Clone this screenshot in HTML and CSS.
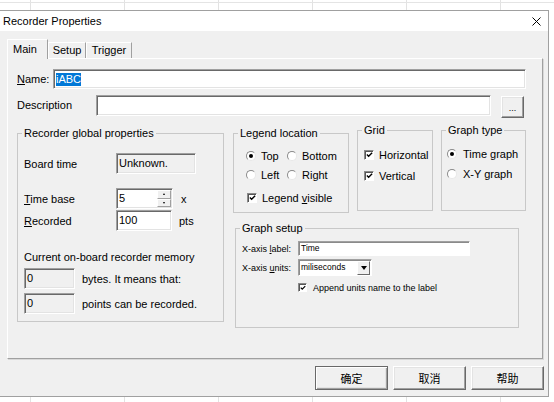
FILE: index.html
```html
<!DOCTYPE html>
<html lang="en">
<head>
    <meta charset="UTF-8">
    <meta name="viewport" content="width=device-width, initial-scale=1.0">
    <title>Recorder Properties</title>
    <link rel="stylesheet" href="styles.css">
</head>
<body>
    <div class="dialog">
        <div class="titlebar">
            <span class="title">Recorder Properties</span>
            <svg class="close" width="9" height="9" viewBox="0 0 9 9">
                <path d="M0.5 0.5 L8.5 8.5 M8.5 0.5 L0.5 8.5" stroke="#000" stroke-width="1" fill="none"/>
            </svg>
        </div>
        <div class="client">
            <div class="tabs">
                <div class="tab active tab-main">Main</div>
                <div class="tab tab-setup">Setup</div>
                <div class="tab tab-trigger">Trigger</div>
            </div>
            <div class="panel">
                <div class="name-row">
                    <span class="lbl name-lbl"><u>N</u>ame:</span>
                    <div class="field name-field"><span class="sel">iABC</span></div>
                </div>
                <div class="desc-row">
                    <span class="lbl desc-lbl">Description</span>
                    <div class="field desc-field"></div>
                    <div class="btn dots-btn">...</div>
                </div>
                <div class="groups">
                    <!-- left column -->
                    <fieldset class="group recorder">
                        <legend>Recorder global properties</legend>
                        <div class="rec-row board-row">
                            <span class="rec-lbl">Board time</span>
                            <div class="field readonly board-field">Unknown.</div>
                        </div>
                        <div class="rec-row time-row">
                            <span class="rec-lbl"><u>T</u>ime base</span>
                            <div class="field spin-field">
                                <span class="spin-text">5</span>
                                <span class="spin-btns">
                                    <span class="spin-btn"><span class="tri-up"></span></span>
                                    <span class="spin-btn"><span class="tri-down"></span></span>
                                </span>
                            </div>
                            <span class="unit unit-x">x</span>
                        </div>
                        <div class="rec-row recorded-row">
                            <span class="rec-lbl"><u>R</u>ecorded</span>
                            <div class="field recorded-field">100</div>
                            <span class="unit unit-pts">pts</span>
                        </div>
                        <div class="mem-text">Current on-board recorder memory</div>
                        <div class="rec-row mem-row">
                            <div class="field readonly mem-field">0</div>
                            <span>bytes. It means that:</span>
                        </div>
                        <div class="rec-row mem-row">
                            <div class="field readonly mem-field">0</div>
                            <span>points can be recorded.</span>
                        </div>
                    </fieldset>

                    <!-- right column -->
                    <div class="right-col">
                        <div class="top-row">
                            <fieldset class="group legend-box">
                                <legend>Legend location</legend>
                                <div class="radio-grid">
                                    <span class="opt"><span class="rad on"></span><span>Top</span></span>
                                    <span class="opt"><span class="rad"></span><span>Bottom</span></span>
                                    <span class="opt"><span class="rad"></span><span>Left</span></span>
                                    <span class="opt"><span class="rad"></span><span>Right</span></span>
                                </div>
                                <div class="opt legend-visible">
                                    <span class="chk"><svg width="8" height="8" viewBox="0 0 8 8"><path d="M1 3.5 L3 5.5 L7 1.5" stroke="#000" stroke-width="1.6" fill="none"/></svg></span>
                                    <span>Legend <u>v</u>isible</span>
                                </div>
                            </fieldset>
                            <fieldset class="group grid-box">
                                <legend>Grid</legend>
                                <div class="opt grid-h">
                                    <span class="chk"><svg width="8" height="8" viewBox="0 0 8 8"><path d="M1 3.5 L3 5.5 L7 1.5" stroke="#000" stroke-width="1.6" fill="none"/></svg></span>
                                    <span>Horizontal</span>
                                </div>
                                <div class="opt grid-v">
                                    <span class="chk"><svg width="8" height="8" viewBox="0 0 8 8"><path d="M1 3.5 L3 5.5 L7 1.5" stroke="#000" stroke-width="1.6" fill="none"/></svg></span>
                                    <span>Vertical</span>
                                </div>
                            </fieldset>
                            <fieldset class="group type-box">
                                <legend>Graph type</legend>
                                <div class="opt type-time"><span class="rad on"></span><span>Time graph</span></div>
                                <div class="opt type-xy"><span class="rad"></span><span>X-Y graph</span></div>
                            </fieldset>
                        </div>
                        <fieldset class="group setup-box">
                            <legend>Graph setup</legend>
                            <div class="setup-row setup-label-row">
                                <span class="setup-lbl">X-axis <u>l</u>abel:</span>
                                <div class="field small-field label-field">Time</div>
                            </div>
                            <div class="setup-row setup-units-row">
                                <span class="setup-lbl">X-axis <u>u</u>nits:</span>
                                <div class="field small-field units-field">
                                    <span class="units-text">miliseconds</span>
                                    <span class="drop-btn"><span class="tri-down big"></span></span>
                                </div>
                            </div>
                            <div class="setup-row setup-check-row">
                                <span class="chk small"><svg width="8" height="8" viewBox="0 0 8 8"><path d="M1 3.5 L3 5.5 L7 1.5" stroke="#000" stroke-width="1.6" fill="none"/></svg></span>
                                <span>Append units name to the label</span>
                            </div>
                        </fieldset>
                    </div>
                </div>
            </div>
            <div class="buttons">
                <div class="btn cmd default">确定</div>
                <div class="btn cmd">取消</div>
                <div class="btn cmd">帮助</div>
            </div>
        </div>
    </div>
</body>
</html>
```

FILE: styles.css
```css
body {
    margin: 0;
    width: 554px;
    height: 402px;
    overflow: hidden;
    background-color: #fff;
    background-image:
        linear-gradient(to bottom, transparent 2px, #e4e4e4 2px, #e4e4e4 3px, transparent 3px),
        linear-gradient(to right, #e2e2e2 1px, transparent 1px);
    background-size: 100% 10px, 94px 100%;
    background-repeat: no-repeat, repeat;
    background-position: 0 0, 30px 0;
    font: 11px "Liberation Sans", Arial, "Noto Sans CJK SC", sans-serif;
    color: #000;
}
u {
    text-decoration-thickness: 1px;
    text-underline-offset: 1px;
}
.dialog {
    margin-top: 10px;
    width: 549px;
    height: 387px;
    box-sizing: border-box;
    border: 1px solid #a0a0a0;
    border-left: none;
    background: #f0f0f0;
    display: flex;
    flex-direction: column;
}
.titlebar {
    height: 20px;
    flex: none;
    background: #fff;
    display: flex;
    align-items: center;
    justify-content: space-between;
    padding: 0 7px 0 3px;
}
.title {
    font-size: 11px;
    line-height: 13px;
}
.close {
    display: block;
    margin-top: 1px;
}
.client {
    flex: 1;
    padding: 8px 4px 0 7px;
    display: flex;
    flex-direction: column;
}

/* tabs */
.tabs {
    height: 19px;
    display: flex;
    align-items: flex-start;
    position: relative;
    z-index: 1;
}
.tab {
    box-sizing: border-box;
    height: 16px;
    margin-top: 3px;
    border: 1px solid;
    border-color: #fff #a0a0a0 transparent #fff;
    border-bottom: none;
    line-height: 15px;
    text-align: center;
    background: #f0f0f0;
}
.tab.active {
    height: 20px;
    margin-top: 0;
    line-height: 18px;
    text-align: left;
    padding-left: 5px;
}
.tab-main { width: 41px; }
.tab-setup { width: 38px; }
.tab-trigger { width: 46px; }

.panel {
    box-sizing: border-box;
    height: 301px;
    margin-right: 1px;
    border: 1px solid;
    border-color: #fff #a0a0a0 #a0a0a0 #fff;
    box-shadow: 1px 1px 0 #d8d8d8;
    padding: 10px 16px 0 9px;
}

/* sunken fields */
.field {
    box-sizing: border-box;
    height: 20px;
    background: #fff;
    border: 1px solid;
    border-color: #a0a0a0 #fff #fff #a0a0a0;
    box-shadow: inset 1px 1px 0 #696969, inset -1px -1px 0 #e3e3e3;
    padding-left: 2px;
    display: flex;
    align-items: center;
    line-height: 13px;
    white-space: nowrap;
}
.field.readonly {
    background: #f0f0f0;
}

/* raised buttons */
.btn {
    box-sizing: border-box;
    background: #f0f0f0;
    border: 1px solid;
    border-color: #fff #696969 #696969 #fff;
    box-shadow: inset -1px -1px 0 #a0a0a0, inset 1px 1px 0 #e3e3e3;
    display: flex;
    align-items: center;
    justify-content: center;
}

.name-row {
    display: flex;
    align-items: center;
    height: 20px;
}
.lbl {
    flex: none;
}
.name-lbl { width: 36px; }
.name-field { width: 473px; }
.sel {
    background: #0078d7;
    color: #fff;
    line-height: 13px;
}

.desc-row {
    display: flex;
    align-items: flex-start;
    height: 23px;
    margin-top: 6px;
}
.desc-lbl {
    width: 79px;
    line-height: 20px;
}
.desc-field {
    width: 395px;
    height: 21px;
}
.dots-btn {
    width: 23px;
    height: 22px;
    margin: 1px 0 0 10px;
    font-size: 9px;
    padding-top: 2px;
}

/* group boxes */
.groups {
    display: flex;
    align-items: flex-start;
    gap: 9px;
    margin-top: 6px;
}
.group {
    box-sizing: border-box;
    margin: 0;
    padding: 0 6px;
    border: 1px solid #c8c8c8;
    min-width: 0;
}
.group legend {
    padding: 0 2px;
    margin-left: -2px;
    line-height: 13px;
}
.recorder {
    width: 207px;
    height: 195px;
    margin-top: 3px;
}
.rec-row {
    display: flex;
    align-items: center;
    height: 21px;
}
.rec-lbl {
    width: 92px;
    flex: none;
}
.rec-row .field {
    height: 21px;
}
.board-row { margin-top: 13px; }
.board-field { width: 80px; }
.time-row { margin-top: 14px; }
.recorded-row { margin-top: 1px; }
.spin-field {
    width: 57px;
    padding-right: 1px;
}
.spin-text {
    flex: 1;
}
.spin-btns {
    width: 14px;
    height: 17px;
    display: flex;
    flex-direction: column;
}
.spin-btn {
    flex: 1;
    box-sizing: border-box;
    background: #f0f0f0;
    border: 1px solid;
    border-color: #fff #a0a0a0 #a0a0a0 #fff;
    display: flex;
    align-items: center;
    justify-content: center;
}
.tri-up {
    width: 0;
    height: 0;
    border-left: 1.5px solid transparent;
    border-right: 1.5px solid transparent;
    border-bottom: 2px solid #000;
}
.tri-down {
    width: 0;
    height: 0;
    border-left: 1.5px solid transparent;
    border-right: 1.5px solid transparent;
    border-top: 2px solid #000;
}
.tri-down.big {
    border-left-width: 3.5px;
    border-right-width: 3.5px;
    border-top-width: 4px;
}
.recorded-field { width: 56px; }
.unit-x { margin-left: 8px; }
.unit-pts { margin-left: 7px; }
.mem-text {
    margin-top: 20px;
    line-height: 13px;
}
.mem-row {
    margin-top: 4px;
}
.mem-field {
    width: 51px;
    margin-right: 7px;
}

.right-col {
    display: flex;
    flex-direction: column;
}
.top-row {
    display: flex;
    align-items: flex-start;
    gap: 8px;
}
.legend-box {
    width: 116px;
    height: 86px;
    margin-top: 3px;
}
.grid-box {
    width: 76px;
    height: 87px;
}
.type-box {
    width: 85px;
    height: 87px;
}

.opt {
    display: flex;
    align-items: center;
    gap: 5px;
    height: 13px;
    white-space: nowrap;
}
.rad {
    box-sizing: border-box;
    width: 10px;
    height: 10px;
    flex: none;
    border-radius: 50%;
    border: 1px solid;
    border-color: #8a8a8a #e8e8e8 #e8e8e8 #8a8a8a;
    background: #fff;
    display: flex;
    align-items: center;
    justify-content: center;
}
.rad.on::after {
    content: "";
    width: 4px;
    height: 4px;
    border-radius: 50%;
    background: #000;
}
.chk {
    box-sizing: border-box;
    width: 10px;
    height: 10px;
    flex: none;
    background: #fff;
    border: 1px solid;
    border-color: #8a8a8a #fff #fff #8a8a8a;
    box-shadow: inset 1px 1px 0 #555;
    display: flex;
    align-items: center;
    justify-content: center;
}
.chk svg {
    display: block;
    margin: 1px 0 0 1px;
}

.radio-grid {
    display: grid;
    grid-template-columns: 41px auto;
    row-gap: 6px;
    margin: 9px 0 0 6px;
}
.legend-visible {
    margin: 10px 0 0 7px;
}
.grid-h { margin-top: 11px; }
.grid-v { margin-top: 8px; }
.type-time { margin: 10px 0 0 -1px; gap: 6px; }
.type-xy { margin: 7px 0 0 -1px; gap: 6px; }

.setup-box {
    width: 284px;
    height: 106px;
    margin: 9px 0 0 2px;
}
.setup-row {
    display: flex;
    align-items: center;
    font-size: 9px;
}
.setup-lbl {
    width: 56px;
    flex: none;
    white-space: nowrap;
}
.small-field {
    font-size: 8.5px;
    box-shadow: inset 1px 1px 0 #8a8a8a;
}
.setup-label-row {
    margin-top: 6px;
    height: 15px;
}
.label-field {
    width: 172px;
    height: 15px;
}
.setup-units-row {
    margin-top: 3px;
    height: 17px;
}
.units-field {
    width: 74px;
    height: 17px;
    padding-right: 1px;
}
.units-text {
    flex: 1;
}
.drop-btn {
    box-sizing: border-box;
    width: 13px;
    height: 14px;
    background: #f0f0f0;
    border: 1px solid;
    border-color: #fff #696969 #696969 #fff;
    display: flex;
    align-items: center;
    justify-content: center;
}
.setup-check-row {
    margin: 5px 0 0 56px;
    height: 13px;
    gap: 6px;
}
.chk.small {
    width: 9px;
    height: 9px;
}

/* dialog buttons */
.buttons {
    display: flex;
    justify-content: flex-end;
    gap: 5px;
    margin-top: 7px;
}
.cmd {
    width: 73px;
    height: 24px;
    font-family: "Noto Sans CJK SC", sans-serif;
    font-size: 11px;
}
.cmd.default {
    border-color: #696969;
    box-shadow: inset 1px 1px 0 #fff, inset -1px -1px 0 #a0a0a0, inset -2px -2px 0 #e3e3e3;
}
```
